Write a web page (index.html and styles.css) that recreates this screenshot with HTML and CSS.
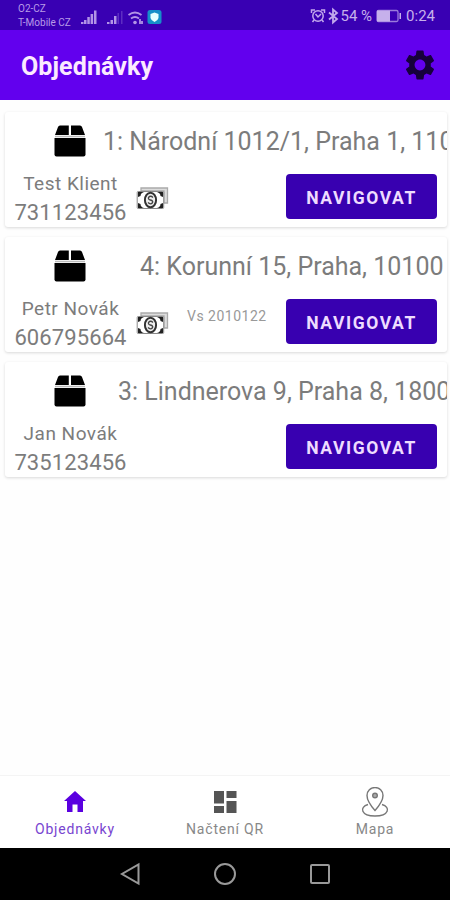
FILE: index.html
```html
<!DOCTYPE html>
<html lang="cs">
<head>
    <meta charset="UTF-8">
    <meta name="viewport" content="width=device-width, initial-scale=1.0">
    <title>Objednávky</title>
    <link rel="stylesheet" href="styles.css">
</head>
<body>
    <svg class="symbols" width="0" height="0">
        <symbol id="box" viewBox="0 0 32 32">
            <path d="M6 0.5H14.8V10H1L4 2Q4.500 .5 6 .5ZM17 .5H26Q27.500 .5 28 2L31 10H17Z"/>
            <path d="M1 11.500H31" stroke="#bbb" stroke-width="1.500"/>
            <path d="M.5 13H31.500V29.500Q31.500 31.500 29.500 31.500H2.500Q.5 31.500 .5 29.500Z"/>
        </symbol>
        <symbol id="money" viewBox="0 0 33 23">
            <path d="M5 4V1H31.500V16H28V4Z" fill="#ddd" stroke="#aaa" stroke-width="1.300"/>
            <rect x="1.200" y="4.500" width="26.500" height="17" rx="1" fill="#fff" stroke="#888" stroke-width="1"/>
            <path d="M2 5H8Q4.500 6 4.500 9L2 10ZM21 5H27V10L24.500 9Q24.500 6 21 5ZM2 16L4.500 17Q4.500 20 8 21H2ZM27 16V21H21Q24.500 20 24.500 17Z" fill="#222"/>
            <ellipse cx="14.500" cy="13" rx="5.600" ry="7.300" fill="#eee" stroke="#333" stroke-width="2"/>
            <path d="M17 10.500Q14.500 8 12.500 10.500Q12 12.500 14.500 13Q17.500 13.800 16.500 15.800Q14.500 18 12 15.500" fill="none" stroke="#444" stroke-width="1.300"/>
        </symbol>
    </svg>

    <div class="status-bar">
        <div class="carriers">
            <div>O2-CZ</div>
            <div>T-Mobile CZ</div>
        </div>
        <svg class="status-icons" width="84" height="20" viewBox="0 0 84 20">
            <g fill="#b294e6">
                <path d="M1 14h2.500v2H1zM4 12h2.500v4H4zM7.300 9h2.500v7H7.300zM10.600 6h2.500v10h-2.500zM14 2.500h2.500V16H14z"/>
                <path d="M27 14h2.500v2H27zM30.500 12h2.500v4h-2.500zM34 8h2.500v8H34z"/>
                <path d="M37.500 5h1.500v11h-1.500zM41 3h1.500v13H41z" opacity=".3"/>
                <circle cx="55" cy="14.500" r="1.800"/>
            </g>
            <path d="M48.500 7Q55 2 61.500 7M51 10.500Q55 7.500 59 10.500M60 11v5M62 16v-3" fill="none" stroke="#b294e6" stroke-width="1.800"/>
            <rect x="67.500" y="2" width="14" height="14" rx="2.500" fill="#168fc9"/>
            <path d="M74.500 4.500L78.500 6V10Q78 12.500 74.500 14Q71 12.500 70.500 10V6Z" fill="#e6ffff"/>
        </svg>
        <div class="status-right">
            <svg width="31" height="18" viewBox="0 0 31 18" fill="none" stroke="#c2a8ec" stroke-width="1.500">
                <circle cx="9" cy="9" r="5.200"/>
                <path d="M2.500 6V3H6M12 3H15.500V6M6.500 7L9 10L12 7M5 13L3.500 15M13 13L14.500 15"/>
                <path d="M20 5.500L28 12L24 15.500V2.500L28 6L20 12.500" stroke-width="1.800"/>
            </svg>
            <span class="percent">54 %</span>
            <svg class="battery" width="26" height="14" viewBox="0 0 26 14">
                <rect x="1" y="1.500" width="21" height="11" rx="1.500" fill="none" stroke="#9b7bdc" stroke-width="1.300"/>
                <path d="M1 1.500H14V12.500H1ZM23.500 4H25V10H23.500Z" fill="#c6b0eb"/>
            </svg>
            <span class="clock">0:24</span>
        </div>
    </div>

    <header class="app-bar">
        <h1>Objednávky</h1>
        <svg width="36" height="36" viewBox="0 0 24 24" fill="#16003c">
            <path d="M19.140 12.940c.04-.3.060-.610.060-.940 0-.320-.020-.640-.070-.940l2.030-1.580c.180-.140.230-.410.120-.610l-1.920-3.320c-.120-.220-.370-.290-.590-.220l-2.390.960c-.5-.380-1.030-.7-1.620-.940L14.400 2.810c-.040-.240-.240-.410-.480-.410h-3.840c-.240 0-.430.170-.470.410L9.250 5.350c-.590.240-1.130.570-1.620.940L5.240 5.330c-.220-.080-.470 0-.590.220L2.740 8.870c-.120.210-.080.470.120.610l2.030 1.580c-.050.3-.090.630-.090.940s.020.640.070.940l-2.030 1.580c-.180.140-.230.410-.120.610l1.920 3.320c.120.220.370.290.590.220l2.390-.960c.5.380 1.030.7 1.620.940l.36 2.540c.050.240.240.410.480.410h3.840c.240 0 .440-.170.470-.410l.36-2.540c.590-.240 1.130-.560 1.620-.940l2.390.960c.220.080.470 0 .590-.220l1.920-3.320c.120-.220.070-.470-.120-.610zM12 15.600c-1.980 0-3.600-1.620-3.600-3.600s1.620-3.600 3.600-3.600 3.600 1.620 3.600 3.600-1.620 3.600-3.600 3.600z"/>
        </svg>
    </header>

    <main class="orders">
        <div class="card">
            <div class="card-top">
                <svg class="box-icon"><use href="#box"/></svg>
                <div class="address address-first">1: Národní 1012/1, Praha 1, 110</div>
            </div>
            <div class="card-bottom">
                <div class="client">
                    <div class="name">Test Klient</div>
                    <div class="phone">731123456</div>
                </div>
                <svg class="money-icon"><use href="#money"/></svg>
                <button class="navigate">NAVIGOVAT</button>
            </div>
        </div>

        <div class="card">
            <div class="card-top">
                <svg class="box-icon"><use href="#box"/></svg>
                <div class="address address-second">4: Korunní 15, Praha, 10100</div>
            </div>
            <div class="card-bottom">
                <div class="client">
                    <div class="name">Petr Novák</div>
                    <div class="phone">606795664</div>
                </div>
                <svg class="money-icon"><use href="#money"/></svg>
                <div class="vs">Vs 2010122</div>
                <button class="navigate">NAVIGOVAT</button>
            </div>
        </div>

        <div class="card">
            <div class="card-top">
                <svg class="box-icon"><use href="#box"/></svg>
                <div class="address address-third">3: Lindnerova 9, Praha 8, 1800</div>
            </div>
            <div class="card-bottom">
                <div class="client">
                    <div class="name">Jan Novák</div>
                    <div class="phone">735123456</div>
                </div>
                <button class="navigate">NAVIGOVAT</button>
            </div>
        </div>
    </main>

    <nav class="tabs">
        <div class="tab active">
            <svg width="30" height="30" viewBox="0 0 30 30">
                <path d="M15 4L26 14H23V25H17.500V17.500H12.500V25H7V14H4Z" fill="#5a00e0"/>
            </svg>
            <span>Objednávky</span>
        </div>
        <div class="tab">
            <svg width="30" height="30" viewBox="0 0 30 30">
                <path d="M4 4H14V16.500H4ZM16.500 4H26.500V11H16.500ZM4 19H14V26H4ZM16.500 14H26.500V26H16.500Z" fill="#555"/>
            </svg>
            <span>Načtení QR</span>
        </div>
        <div class="tab">
            <svg width="30" height="30" viewBox="0 0 30 30" fill="none" stroke="#777" stroke-width="1.400">
                <path d="M15 23.500Q7 14.500 7 8.500A8 8 0 0 1 23 8.500Q23 14.500 15 23.500Z"/>
                <circle cx="15" cy="8.500" r="2.300" fill="#aaa"/>
                <path d="M8 17.500C-1 20 1 29 15 29S31 20 22 17.500"/>
            </svg>
            <span>Mapa</span>
        </div>
    </nav>

    <div class="system-nav">
        <svg width="24" height="24" viewBox="0 0 24 24"><path d="M20.500 2.500V21.500L4 12Z"/></svg>
        <svg width="24" height="24" viewBox="0 0 24 24"><circle cx="12" cy="12" r="10"/></svg>
        <svg width="24" height="24" viewBox="0 0 24 24"><rect x="3" y="3" width="18" height="18" rx="1"/></svg>
    </div>
</body>
</html>
```
FILE: styles.css
```css
body {
    font-family: Roboto, sans-serif;
    margin: 0;
    height: 900px;
    display: flex;
    flex-direction: column;
    background: #fefefe;
    color: #7c7c7c;
    overflow: hidden;
}
svg {
    display: block;
    flex-shrink: 0;
}
.symbols {
    position: absolute;
}
.status-bar {
    box-sizing: border-box;
    height: 30px;
    padding: 0 15px 0 18px;
    display: flex;
    align-items: center;
    background: #3900b3;
    color: #b89be8;
}
.carriers {
    width: 62px;
    padding-top: 2px;
    font-size: 10px;
    line-height: 14px;
    white-space: nowrap;
}
.status-icons {
    margin-top: 5px;
}
.status-right {
    margin-left: auto;
    display: flex;
    align-items: center;
    padding-top: 2px;
    font-size: 15px;
    white-space: nowrap;
    color: #c6b0eb;
}
.battery {
    margin: 0 4px;
}
.app-bar {
    box-sizing: border-box;
    height: 70px;
    padding: 0 12px 0 21px;
    display: flex;
    align-items: center;
    justify-content: space-between;
    background: #6200ee;
}
.app-bar h1 {
    margin: 0;
    padding-top: 3px;
    font-size: 25px;
    font-weight: 700;
    letter-spacing: 0.1px;
    color: #fbeaff;
}
.orders {
    flex: 1;
    display: flex;
    flex-direction: column;
    gap: 10px;
    padding: 12px 3px 0 5px;
}
.card {
    height: 115px;
    border-radius: 3px;
    background: #fff;
    box-shadow: 0 1px 3px rgba(0, 0, 0, 0.15);
    overflow: hidden;
}
.card-top {
    height: 58px;
    display: flex;
    align-items: center;
}
.box-icon {
    width: 32px;
    height: 32px;
    margin-left: 49px;
    margin-top: -1px;
}
.address {
    font-size: 25px;
    white-space: nowrap;
}
.address-first {
    margin-left: 17px;
}
.address-second {
    margin-left: 54px;
}
.address-third {
    margin-left: 32px;
}
.card-bottom {
    height: 57px;
    display: flex;
    align-items: flex-start;
}
.client {
    width: 131px;
    text-align: center;
}
.name {
    font-size: 19px;
    letter-spacing: 0.5px;
    line-height: 28px;
}
.phone {
    font-size: 22px;
    letter-spacing: 0.1px;
    line-height: 30px;
}
.money-icon {
    width: 33px;
    height: 23px;
    margin-top: 17px;
}
.vs {
    margin: 11px 0 0 18px;
    font-size: 14px;
    letter-spacing: 0.5px;
    line-height: 20px;
    color: #999;
}
.navigate {
    width: 151px;
    height: 45px;
    margin: 4px 10px 0 auto;
    padding: 2px 0 0;
    border: none;
    border-radius: 4px;
    font-family: inherit;
    font-size: 17.5px;
    font-weight: 700;
    letter-spacing: 1.6px;
    color: #eedcff;
    background: #3800b0;
}
.tabs {
    box-sizing: border-box;
    height: 73px;
    display: flex;
    border-top: 1px solid #f4f4f4;
    background: #fff;
}
.tab {
    flex: 1;
    display: flex;
    flex-direction: column;
    align-items: center;
    padding-top: 11px;
    font-size: 14px;
    letter-spacing: 0.8px;
    line-height: 24px;
    color: #888;
}
.active {
    color: #7845d0;
}
.system-nav {
    height: 52px;
    display: flex;
    align-items: center;
    justify-content: center;
    gap: 71px;
    background: #000;
}
.system-nav svg {
    fill: none;
    stroke: #999;
    stroke-width: 2;
}
```
